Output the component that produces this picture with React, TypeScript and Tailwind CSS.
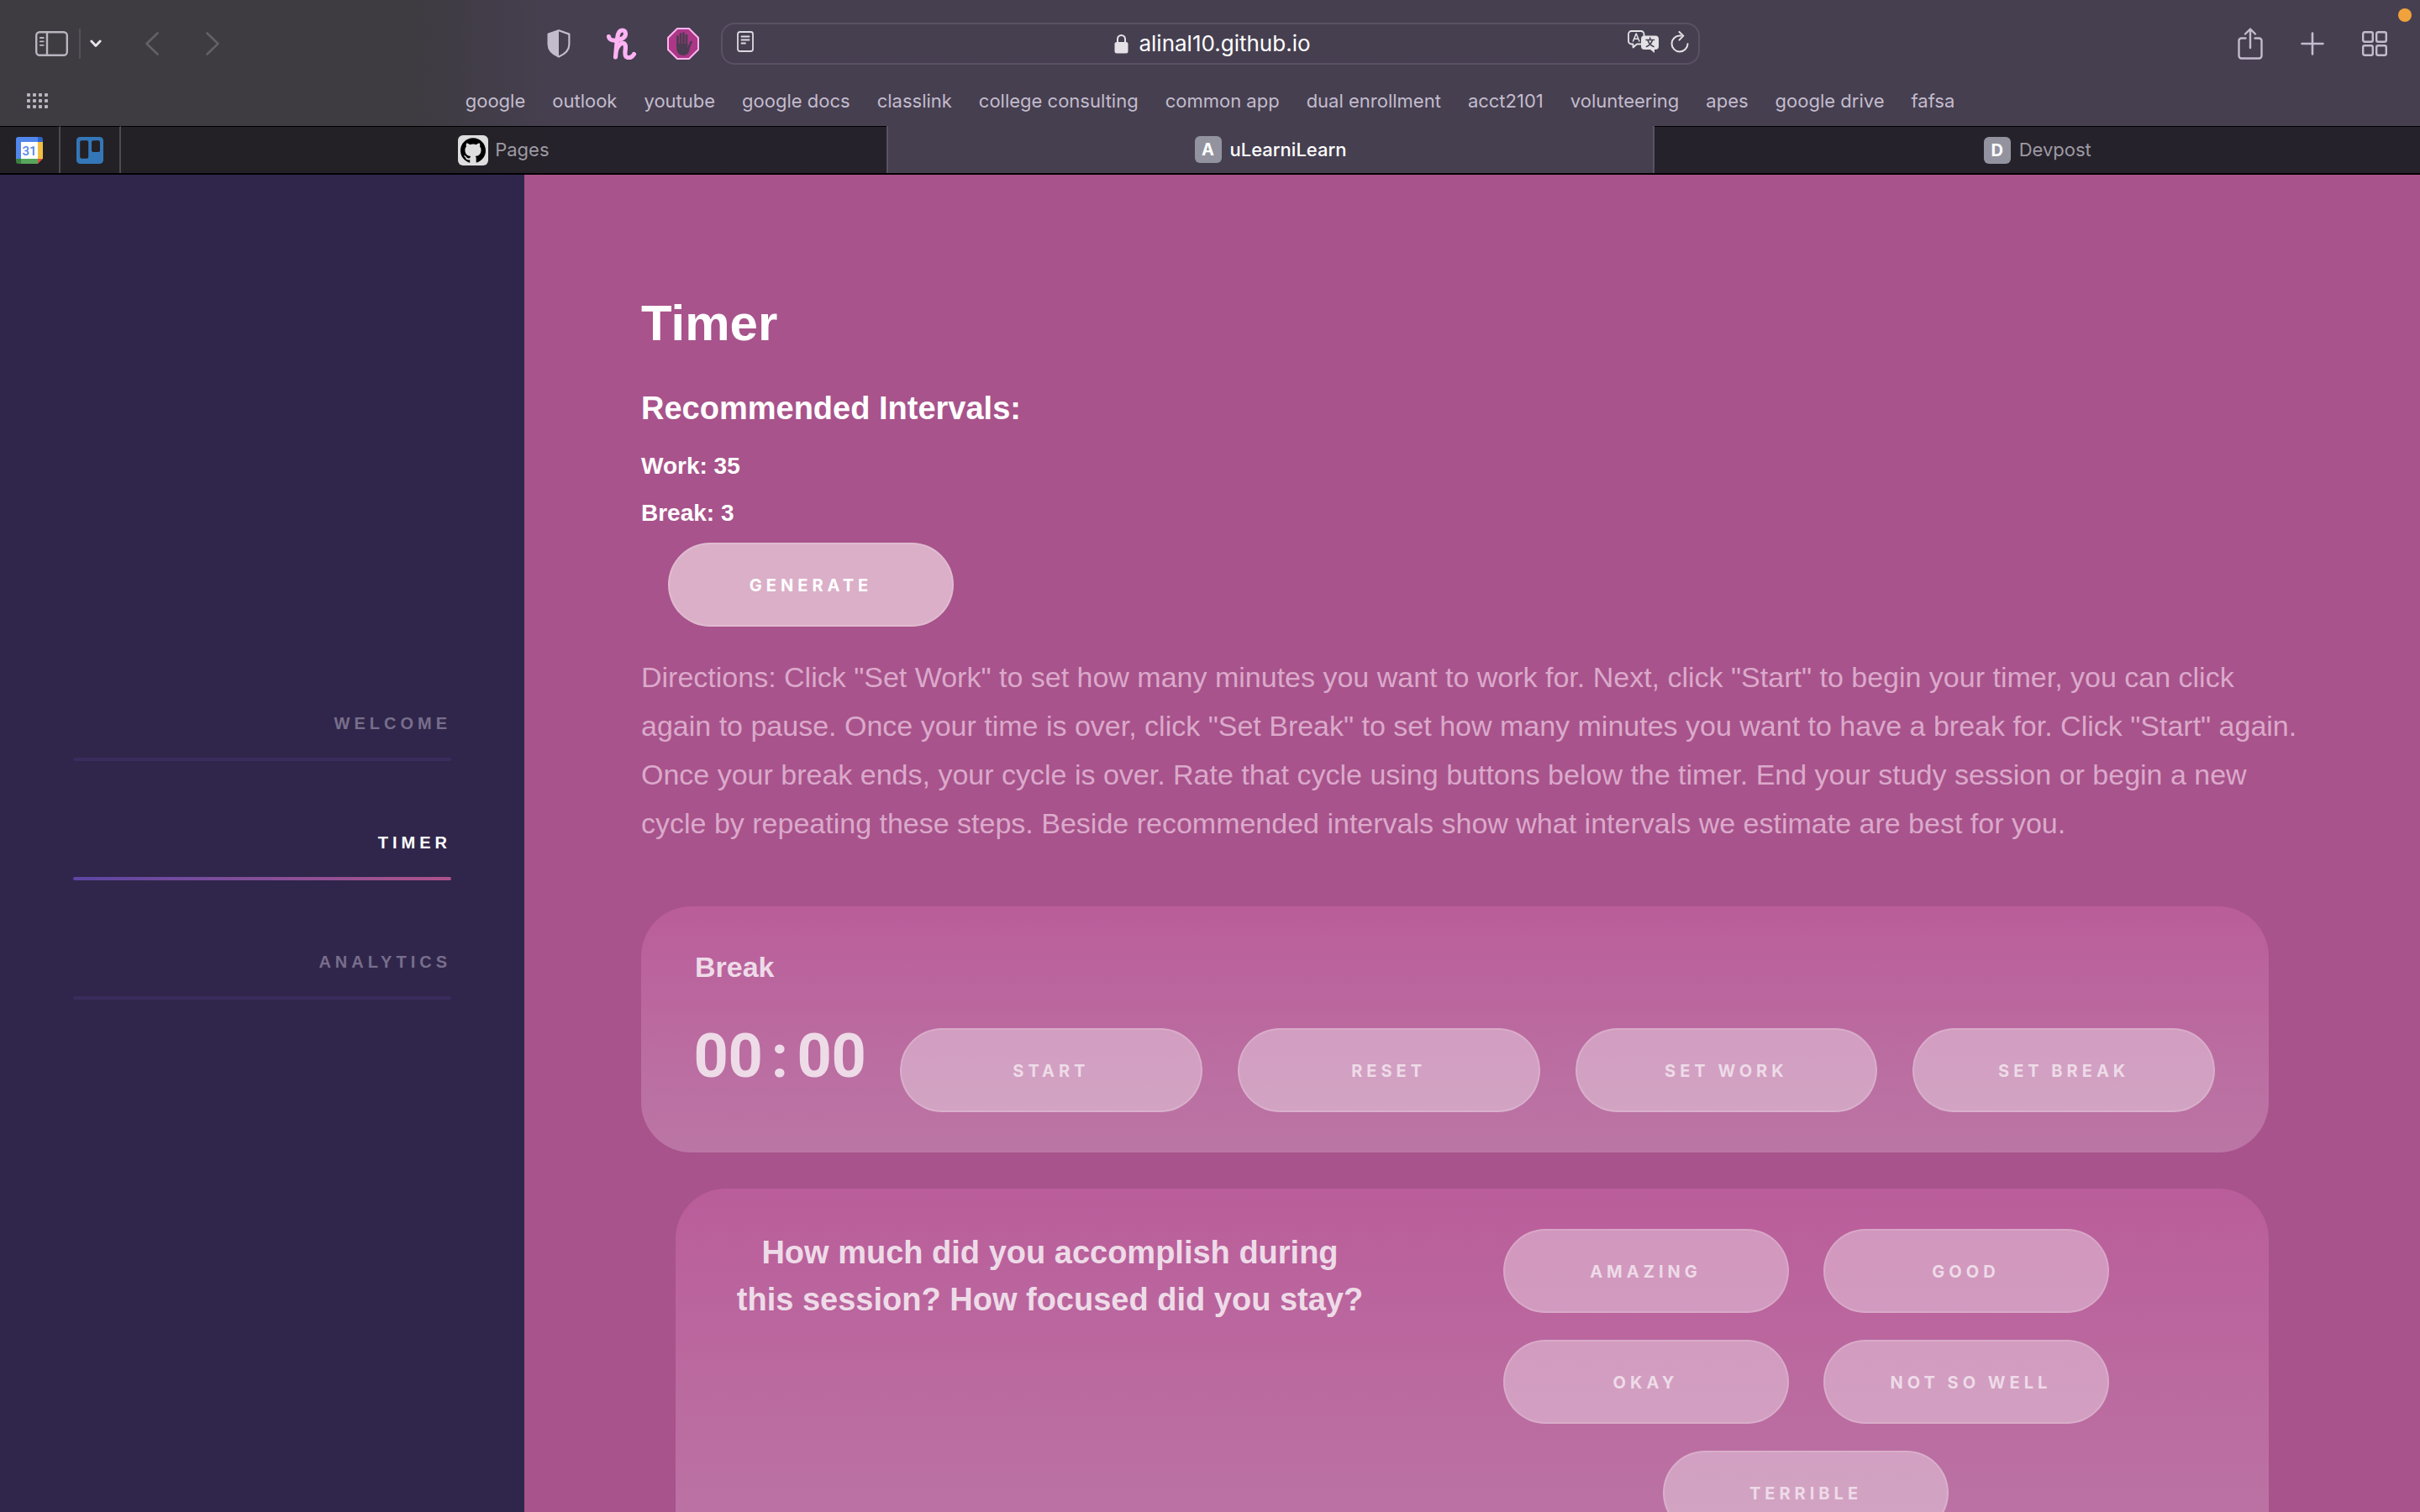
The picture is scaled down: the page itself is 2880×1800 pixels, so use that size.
import type { ReactNode } from 'react';
import { SiGithub } from 'react-icons/si';

const bookmarks = [
  'google',
  'outlook',
  'youtube',
  'google docs',
  'classlink',
  'college consulting',
  'common app',
  'dual enrollment',
  'acct2101',
  'volunteering',
  'apes',
  'google drive',
  'fafsa',
];

const navLinks = [
  { label: 'Welcome', active: false },
  { label: 'Timer', active: true },
  { label: 'Analytics', active: false },
];

const timerActions = ['Start', 'Reset', 'Set Work', 'Set Break'];
const ratings = ['Amazing', 'Good', 'Okay', 'Not so well', 'Terrible'];

function SidebarIcon() {
  return (
    <svg className="w-[39px] h-[30px]" viewBox="0 0 39 30" fill="none" stroke="#b9b5bf" strokeWidth="2.4" strokeLinecap="round">
      <rect x="1.2" y="1.2" width="36.6" height="27.6" rx="4" />
      <path d="M14 2v26" />
      <path d="M5.8 8h4M5.8 12.4h4M5.8 16.8h4" strokeWidth="1.8" />
    </svg>
  );
}

function ShieldIcon() {
  return (
    <svg className="w-7 h-[34px]" viewBox="0 0 28 34" fill="none">
      <path d="M14 1.2 26.4 5.6v12.2c0 6.6-5 11.6-12.4 14.8C6.6 29.4 1.6 24.4 1.6 17.8V5.6z" stroke="#c3bccd" strokeWidth="2.2" strokeLinejoin="round" />
      <path d="M14 1.2v31.4C6.6 29.4 1 24.4 1 17.8V5.6z" fill="#c3bccd" />
    </svg>
  );
}

function HoneyIcon() {
  return (
    <svg className="w-[38px] h-[38px]" viewBox="0 0 38 38" fill="none" stroke="#ffb3f3" strokeWidth="5.2" strokeLinecap="round" strokeLinejoin="round">
      <path d="M4.500 10.500C5 14 8.500 15.500 13 15C20 14 24.500 11 24.500 7C24.500 2 17.500 1 15.500 8C14 14 13.500 26 12.500 35" />
      <path d="M13.500 27C15 21.500 19 17.500 22 18.500C27.500 20.500 21.500 31 25 34.500C28.500 37 32.500 35 34.500 31.500" />
    </svg>
  );
}

function AdBlockIcon() {
  return (
    <svg className="w-[38px] h-[38px]" viewBox="0 0 38 38" fill="none">
      <path d="M12 1h14l11 11v14L26 37H12L1 26V12z" fill="#ab3786" stroke="#ffb3ee" strokeWidth="2" />
      <path d="M12.500 10.500V22M16 7.500V20M19.500 6.500V20M23 9V21" stroke="#4b3d51" strokeWidth="2.6" strokeLinecap="round" />
      <path d="M28.500 17 25 25" stroke="#4b3d51" strokeWidth="2.6" strokeLinecap="round" />
      <path d="M11.200 19h13.100v5l2.700-2c0 7-2.600 11-7.600 11-5.600 0-8.200-4-8.200-9z" fill="#4b3d51" />
    </svg>
  );
}

function ReaderIcon() {
  return (
    <svg className="w-5 h-[25px]" viewBox="0 0 20 25" fill="none" stroke="#dcd9e0" strokeWidth="1.8" strokeLinecap="round">
      <rect x="1" y="1" width="18" height="23" rx="2.5" />
      <path d="M5.500 6.500h9M5.500 10.500h9M5.500 14.500h4.500" />
    </svg>
  );
}

function LockIcon() {
  return (
    <svg className="w-[17px] h-6" viewBox="0 0 17 24" fill="none">
      <rect x=".5" y="10" width="16" height="13.5" rx="2.5" fill="#e4e2e6" />
      <path d="M4 11V6.500a4.500 4.500 0 0 1 9 0V11" stroke="#e4e2e6" strokeWidth="2" />
    </svg>
  );
}

function TranslateIcon() {
  return (
    <svg className="w-[37px] h-[27px]" viewBox="0 0 37 27" fill="none" strokeLinecap="round" strokeLinejoin="round">
      <path d="M17 16.500H11l-4.500 4v-4H4.500A3.500 3.500 0 0 1 1 13V4.500A3.500 3.500 0 0 1 4.500 1H16a3.500 3.500 0 0 1 3.500 3.500V7" stroke="#e4e2e6" strokeWidth="1.8" />
      <path d="M6.500 13 10.200 4l3.700 9M7.800 10.200h4.800" stroke="#e4e2e6" strokeWidth="1.5" />
      <path d="M20 6.500h13a4 4 0 0 1 4 4V19a4 4 0 0 1-4 4h-1v4l-5-4h-7a4 4 0 0 1-4-4v-8.500a4 4 0 0 1 4-4z" fill="#e4e2e6" />
      <path d="M22 11.500h9.500M26.700 9v2.500M29.500 11.500c-1 4-3.500 6.500-7 8M24 11.500c1 4 3.500 6.500 7 8" stroke="#463f50" strokeWidth="1.6" />
    </svg>
  );
}

function ReloadIcon() {
  return (
    <svg className="w-[22px] h-[26px]" viewBox="0 0 22 26" fill="none" stroke="#e4e2e6" strokeWidth="2" strokeLinecap="round" strokeLinejoin="round">
      <path d="M12.500 5.500H11A9.500 9.500 0 1 0 20.500 15.200" />
      <path d="M10.500 1l4.800 4.600-4.800 5" />
    </svg>
  );
}

function ShareIcon() {
  return (
    <svg className="w-[30px] h-[38px]" viewBox="0 0 30 38" fill="none" stroke="#c3bccd" strokeWidth="2.4" strokeLinecap="round" strokeLinejoin="round">
      <path d="M9.500 12.500H4.500a3 3 0 0 0-3 3V33.500a3 3 0 0 0 3 3h21a3 3 0 0 0 3-3V15.500a3 3 0 0 0-3-3h-5" />
      <path d="M15 24V2M9 7.500l6-6 6 6" />
    </svg>
  );
}

function TabOverviewIcon() {
  return (
    <svg className="w-[30px] h-[30px]" viewBox="0 0 30 30" fill="none" stroke="#c3bccd" strokeWidth="2.4">
      <rect x="1.2" y="1.2" width="11.6" height="11.6" rx="2" />
      <rect x="17.2" y="1.2" width="11.6" height="11.6" rx="2" />
      <rect x="1.2" y="17.2" width="11.6" height="11.6" rx="2" />
      <rect x="17.2" y="17.2" width="11.6" height="11.6" rx="2" />
    </svg>
  );
}

function BookmarksGridIcon() {
  return (
    <svg className="w-[26px] h-[18px]" viewBox="0 0 26 18" fill="#b9b5bf">
      {[0, 7, 14].map((y) =>
        [0, 7, 14, 21].map((x) => <rect key={`${x}-${y}`} x={x} y={y} width="4" height="4" rx="1" />)
      )}
    </svg>
  );
}

function CalendarIcon() {
  return (
    <svg className="w-8 h-8" viewBox="0 0 32 32">
      <path d="M3 0h23v6H6v20H0V3a3 3 0 0 1 3-3z" fill="#5186ec" />
      <path d="M26 0h3a3 3 0 0 1 3 3v3h-6z" fill="#2d62c9" />
      <path d="M26 6h6v20h-6z" fill="#f2be42" />
      <path d="M6 26h20v6H6z" fill="#58a65c" />
      <path d="M0 26h6v6H3a3 3 0 0 1-3-3z" fill="#3a7e40" />
      <path d="M26 26h6l-6 6z" fill="#d85140" />
      <path d="M6 6h20v20H6z" fill="#fff" />
      <text x="16" y="22" textAnchor="middle" fontSize="15" fontWeight="500" fontFamily="Roboto, sans-serif" fill="#5186ec">31</text>
    </svg>
  );
}

function TrelloIcon() {
  return (
    <svg className="w-8 h-8" viewBox="0 0 32 32">
      <rect width="32" height="32" rx="4.5" fill="#3477b8" />
      <rect x="4.2" y="4.2" width="10" height="21.5" rx="2" fill="#232125" />
      <rect x="18" y="4.2" width="10" height="13.8" rx="2" fill="#232125" />
    </svg>
  );
}

function ToolbarButton({ label, children }: { label: string; children: ReactNode }) {
  return (
    <button aria-label={label} className="flex w-[38px] h-[38px] items-center justify-center">
      {children}
    </button>
  );
}

function LetterIcon({ letter }: { letter: string }) {
  return (
    <span className="flex w-8 h-8 items-center justify-center rounded-md bg-[#93939f] text-[20px] font-bold text-white">
      {letter}
    </span>
  );
}

function Toolbar() {
  return (
    <div className="grid h-[103px] grid-cols-[1fr_1165px_1fr] items-center">
      <div className="flex items-center pl-[42px] pr-[26px]">
        <button aria-label="Show sidebar">
          <SidebarIcon />
        </button>
        <div className="ml-[13px] h-9 w-0.5 bg-[#545158]"></div>
        <button aria-label="Tab groups" className="ml-[11px]">
          <svg className="w-3.5 h-2.5" viewBox="0 0 14 10" fill="none" stroke="#e8e5ec" strokeWidth="2.8" strokeLinecap="round" strokeLinejoin="round">
            <path d="M1.800 2 7 7.500 12.200 2" />
          </svg>
        </button>
        <div className="ml-11 flex gap-10">
          <button aria-label="Back" className="flex w-8 justify-center">
            <svg className="w-4 h-7" viewBox="0 0 16 28" fill="none" stroke="#636066" strokeWidth="2.6" strokeLinecap="round" strokeLinejoin="round">
              <path d="M14.500 1.500 1.500 14l13 12.500" />
            </svg>
          </button>
          <button aria-label="Forward" className="flex w-8 justify-center">
            <svg className="w-4 h-7" viewBox="0 0 16 28" fill="none" stroke="#636066" strokeWidth="2.6" strokeLinecap="round" strokeLinejoin="round">
              <path d="M1.500 1.500l13 12.500-13 12.500" />
            </svg>
          </button>
        </div>
        <div className="ml-auto flex gap-9">
          <ToolbarButton label="Privacy report"><ShieldIcon /></ToolbarButton>
          <ToolbarButton label="Honey"><HoneyIcon /></ToolbarButton>
          <ToolbarButton label="Ad blocker"><AdBlockIcon /></ToolbarButton>
        </div>
      </div>

      <div className="grid h-[50px] grid-cols-[1fr_auto_1fr] items-center rounded-2xl border-2 border-[#5a5264] pl-[17px] pr-[11px]">
        <div className="flex pb-1">
          <button aria-label="Reader view"><ReaderIcon /></button>
        </div>
        <label className="flex items-center gap-3">
          <LockIcon />
          <input
            aria-label="Address"
            defaultValue="alinal10.github.io"
            className="field-sizing-content bg-transparent text-[26px] leading-8 text-white outline-none"
          />
        </label>
        <div className="flex items-center justify-end gap-3.5 pb-1">
          <button aria-label="Translate"><TranslateIcon /></button>
          <button aria-label="Reload"><ReloadIcon /></button>
        </div>
      </div>

      <div className="flex justify-end gap-9 pr-[35px]">
        <ToolbarButton label="Share"><ShareIcon /></ToolbarButton>
        <ToolbarButton label="New tab">
          <svg className="w-7 h-7" viewBox="0 0 28 28" fill="none" stroke="#c3bccd" strokeWidth="2.6" strokeLinecap="round">
            <path d="M14 1.500v25M1.500 14h25" />
          </svg>
        </ToolbarButton>
        <ToolbarButton label="Tab overview"><TabOverviewIcon /></ToolbarButton>
      </div>
    </div>
  );
}

function BookmarksBar() {
  return (
    <div className="grid h-[34px] grid-cols-[1fr_auto_1fr] items-center">
      <div className="flex pl-8">
        <button aria-label="Show bookmarks"><BookmarksGridIcon /></button>
      </div>
      <nav className="flex gap-8 whitespace-nowrap text-[22px] text-[#c3bccd]">
        {bookmarks.map((name) => (
          <a key={name} href="#">{name}</a>
        ))}
      </nav>
    </div>
  );
}

function TabBar() {
  return (
    <div className="mt-[13px] flex h-[58px] border-b-2 border-black text-[22px] text-[#9d9aa2]">
      <button aria-label="Calendar" className="flex w-[72px] items-center justify-center border-t border-r-2 border-t-black border-r-[#4d4a51] bg-[#232125]">
        <CalendarIcon />
      </button>
      <button aria-label="Trello" className="flex w-[72px] items-center justify-center border-t border-r-2 border-t-black border-r-[#4d4a51] bg-[#232125]">
        <TrelloIcon />
      </button>
      <button className="flex flex-1 items-center justify-center gap-2 border-t border-black bg-linear-to-r from-[#232125] from-[40%] to-[#26222c] to-[60%]">
        <span className="flex w-9 h-9 items-center justify-center rounded-md bg-[#dedede] text-black">
          <SiGithub className="w-[30px] h-[30px]" />
        </span>
        Pages
      </button>
      <button className="flex flex-1 items-center justify-center gap-2.5 border-x-2 border-[#5a5264] font-medium text-white">
        <LetterIcon letter="A" />
        uLearniLearn
      </button>
      <button className="flex flex-1 items-center justify-center gap-2.5 border-t border-black bg-[#26222c]">
        <LetterIcon letter="D" />
        Devpost
      </button>
    </div>
  );
}

function Sidebar() {
  return (
    <aside className="flex w-[624px] shrink-0 flex-col justify-center bg-[#30264b] px-[87px]">
      <nav>
        {navLinks.map((link) => (
          <a key={link.label} href="#" className="block pt-12 pb-[27px] text-right text-[20px] font-bold uppercase tracking-[5px]">
            <span className={link.active ? 'block leading-11 text-white' : 'block leading-11 text-[#786e8b]'}>
              {link.label}
            </span>
            <span
              className={
                link.active
                  ? 'mt-[19px] block h-1 rounded-sm bg-linear-to-r from-[#5c45a3] to-[#ae528b]'
                  : 'mt-[19px] block h-1 rounded-sm bg-[#3a2c5d]'
              }
            ></span>
          </a>
        ))}
      </nav>
    </aside>
  );
}

const pill = "h-[100px] rounded-[50px] border-2 pt-0.5 whitespace-nowrap font-['Inter',sans-serif] text-[20px] font-bold uppercase tracking-[5px]";

function TimerCard() {
  return (
    <section className="mt-[70px] mr-10 rounded-[60px] bg-linear-to-b from-[#ba5d9a] to-[#bb76a5] px-16 pt-11 pb-12 text-[#eedbe8]">
      <h3 className="text-[34px] font-bold leading-14">Break</h3>
      <div className="mt-[45px] flex items-start gap-[42px]">
        <div className="flex w-[202px] shrink-0 justify-center font-['Roboto',sans-serif] text-[72px] font-bold leading-[68px]">
          {'00:00'.split('').map((char, i) => (
            <span key={i} className="w-[41px] shrink-0 text-center">{char}</span>
          ))}
        </div>
        {timerActions.map((action) => (
          <button key={action} className={`${pill} flex-1 border-white/15 bg-white/35`}>
            {action}
          </button>
        ))}
      </div>
    </section>
  );
}

function RatingCard() {
  return (
    <section className="mt-[43px] mr-10 ml-[41px] flex rounded-[60px] bg-linear-to-b from-[#ba5d9a] to-[#bb76a5] pt-12 pr-[101px] pb-14 text-[#eedbe8]">
      <h3 className="flex-1 pr-1 text-center text-[38px] font-bold leading-14">
        How much did you accomplish during
        <br />
        this session? How focused did you stay?
      </h3>
      <div className="flex w-[900px] flex-wrap justify-center gap-x-[41px] gap-y-8">
        {ratings.map((rating) => (
          <button key={rating} className={`${pill} w-[340px] border-white/15 bg-white/35 px-[78px]`}>
            {rating}
          </button>
        ))}
      </div>
    </section>
  );
}

export default function App() {
  return (
    <div className="flex h-screen flex-col overflow-hidden">
      <header className="relative shrink-0 bg-linear-to-r from-[#3e3b41] from-[17%] to-[#463f50] to-[23%] font-['Inter',sans-serif]">
        <Toolbar />
        <BookmarksBar />
        <TabBar />
        <span className="absolute top-2.5 right-2.5 w-4 h-4 rounded-full bg-[#f0a33c]"></span>
      </header>

      <div className="flex min-h-0 flex-1 font-['Liberation_Sans',Arial,sans-serif]">
        <Sidebar />
        <main className="min-w-0 flex-1 overflow-hidden bg-[#a8538b] pt-[132px] pr-[140px] pl-[139px] text-white">
          <h1 className="text-[60px] font-bold leading-[90px]">Timer</h1>
          <h2 className="mt-7 text-[38px] font-bold leading-14">Recommended Intervals:</h2>
          <div className="mt-[13px] text-[28px] font-bold leading-14">
            <p>Work: 35</p>
            <p>Break: 3</p>
          </div>
          <button className={`${pill} mt-[7px] ml-8 block w-[340px] border-white/15 bg-[#dbafc8]`}>
            Generate
          </button>
          <p className="mt-[31px] text-[34px] leading-[58px] text-[#dba9cb]">
            Directions: Click "Set Work" to set how many minutes you want to work for. Next, click "Start" to begin your
            timer, you can click again to pause. Once your time is over, click "Set Break" to set how many minutes you
            want to have a break for. Click "Start" again. Once your break ends, your cycle is over. Rate that cycle
            using buttons below the timer. End your study session or begin a new cycle by repeating these steps. Beside
            recommended intervals show what intervals we estimate are best for you.
          </p>
          <TimerCard />
          <RatingCard />
        </main>
      </div>
    </div>
  );
}
